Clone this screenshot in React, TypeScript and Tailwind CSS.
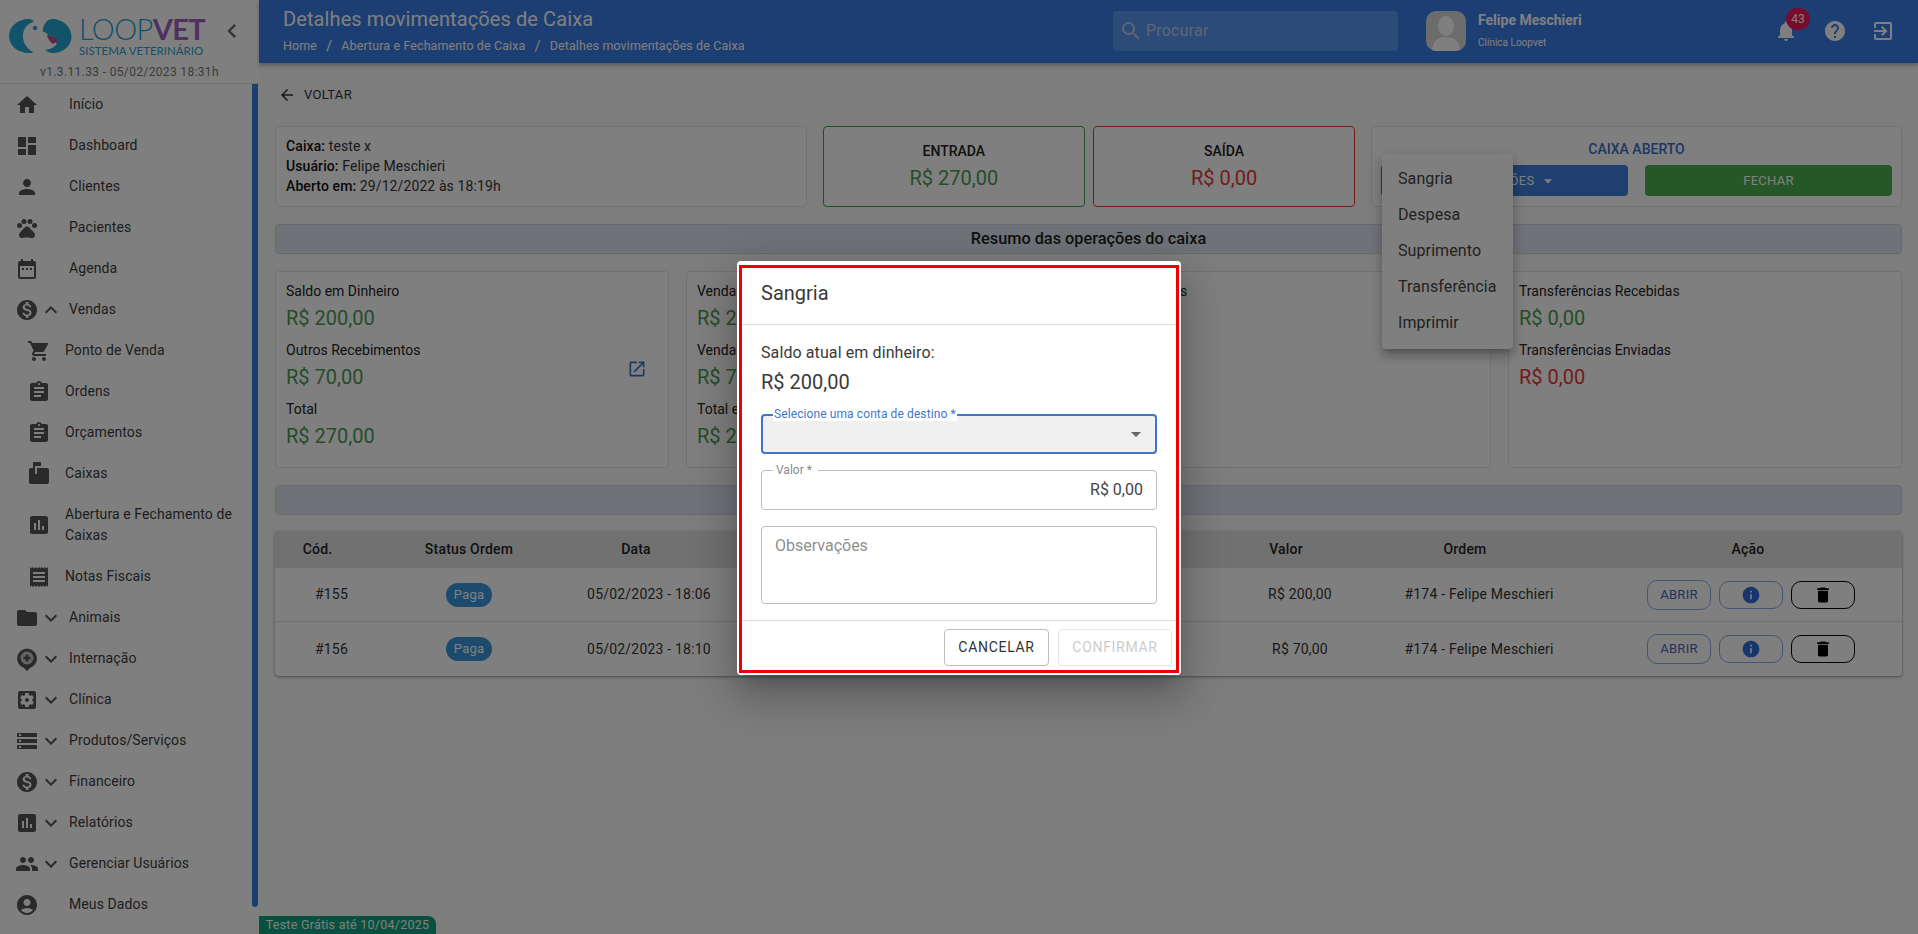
import React from "react";
import {
  MdHome, MdDashboard, MdPerson, MdPets, MdDateRange, MdMonetizationOn, MdExpandLess, MdExpandMore,
  MdShoppingCart, MdAssignment, MdMarkunreadMailbox, MdAssessment, MdReceipt, MdFolder,
  MdSettingsApplications, MdStorage, MdPeople, MdAccountCircle, MdChevronLeft, MdSearch,
  MdNotifications, MdHelp, MdExitToApp, MdArrowBack, MdOpenInNew, MdDelete, MdInfo, MdArrowDropDown,
} from "react-icons/md";

const Pin = ({ size = 24 }: { size?: number }) => (
  <svg width={size} height={size} viewBox="0 0 24 24" fill="currentColor">
    <path d="M12 1.500a10 10 0 0 0-3 19.500l3 3 3-3a10 10 0 0 0-3-19.500z" />
    <circle cx="12" cy="11" r="6.500" fill="#c8c8c8" />
    <path d="M10.700 7.500h2.600v2.200h2.200v2.600h-2.200v2.200h-2.600v-2.200H8.500V9.700h2.200z" />
  </svg>
);

type Item = { icon: React.ReactNode; label: string; chev?: "up" | "down"; sub?: boolean; tall?: boolean };
const S = 24;
const items: Item[] = [
  { icon: <MdHome size={S} />, label: "Início" },
  { icon: <MdDashboard size={S} />, label: "Dashboard" },
  { icon: <MdPerson size={S} />, label: "Clientes" },
  { icon: <MdPets size={S} />, label: "Pacientes" },
  { icon: <MdDateRange size={S} />, label: "Agenda" },
  { icon: <MdMonetizationOn size={S} />, label: "Vendas", chev: "up" },
  { icon: <MdShoppingCart size={S} />, label: "Ponto de Venda", sub: true },
  { icon: <MdAssignment size={S} />, label: "Ordens", sub: true },
  { icon: <MdAssignment size={S} />, label: "Orçamentos", sub: true },
  { icon: <MdMarkunreadMailbox size={S} />, label: "Caixas", sub: true },
  { icon: <MdAssessment size={S} />, label: "Abertura e Fechamento de Caixas", sub: true, tall: true },
  { icon: <MdReceipt size={S} />, label: "Notas Fiscais", sub: true },
  { icon: <MdFolder size={S} />, label: "Animais", chev: "down" },
  { icon: <Pin />, label: "Internação", chev: "down" },
  { icon: <MdSettingsApplications size={S} />, label: "Clínica", chev: "down" },
  { icon: <MdStorage size={S} />, label: "Produtos/Serviços", chev: "down" },
  { icon: <MdMonetizationOn size={S} />, label: "Financeiro", chev: "down" },
  { icon: <MdAssessment size={S} />, label: "Relatórios", chev: "down" },
  { icon: <MdPeople size={S} />, label: "Gerenciar Usuários", chev: "down" },
  { icon: <MdAccountCircle size={S} />, label: "Meus Dados" },
];

function NavRow({ it }: { it: Item }) {
  return (
    <div className={`flex items-center ${it.tall ? "h-[62px]" : "h-[41px]"} ${it.sub ? "pl-[27px]" : "pl-[15px]"}`}>
      <span className="flex w-[24px] shrink-0 justify-center text-[#555]">{it.icon}</span>
      {!it.sub && (
        <span className="flex w-[24px] shrink-0 justify-center text-[#555]">
          {it.chev === "up" && <MdExpandLess size={24} className="shrink-0" />}
          {it.chev === "down" && <MdExpandMore size={24} className="shrink-0" />}
        </span>
      )}
      <span className={`${it.sub ? "ml-[14px] w-[180px]" : "ml-[6px] w-[176px]"} text-[14px] leading-[21px] tracking-[0.1px] text-[#3c3c3c]`}>{it.label}</span>
    </div>
  );
}

function Logo() {
  return (
    <div className="flex h-[62px] items-center pl-[9px] pt-[10px]">
      <svg width="63" height="36" viewBox="0 0 63 36" className="shrink-0">
        <path d="M20 1C8 1 0 9 0 18s8 17 20 17c2.500 0 4.500-.5 4.500-.5C17 30 14 24.500 14 18S17 6.500 25 3.500C25 3.500 23 1 20 1z" fill="#24a6d4" />
        <circle cx="26" cy="10" r="2.200" fill="#24a6d4" />
        <path d="M43 1c11 0 19.500 8 19.500 17.500S54 35 44 35c-3 0-6-1.500-8-3 5-.5 10-3 12-6.500L40 20c-2-1-2-1.500-1-2.500 0-1-2-3-4-3.500-1 0-1.500-1-1-3C35 5 39 1 43 1z" fill="#24a6d4" />
        <path d="M38 17.500l11 3c-1.500 3-3 4.500-5 5.500-3-2-5-5-6-8.500z" fill="#c04a80" />
      </svg>
      <div className="ml-[7px] flex w-[124px] flex-col">
        <div className="h-[28px] whitespace-nowrap text-[29px] leading-[28px] tracking-[-0.6px] text-[#28a0d0] [font-family:'Lato',sans-serif]">
          <span className="font-light">LOOP</span>
          <span className="font-bold text-[#a060c0]">VET</span>
        </div>
        <div className="mt-[2px] whitespace-nowrap text-[11.500px] leading-[12px] text-[#28a0d0] [font-family:'Lato',sans-serif]">SISTEMA VETERINÁRIO</div>
      </div>
      <MdChevronLeft size={28} className="ml-[15px] -mt-[10px] shrink-0 text-[#666]" />
    </div>
  );
}

function Sidebar() {
  return (
    <aside className="flex h-[934px] w-[259px] shrink-0 flex-col bg-[#ffffff]">
      <div className="h-[84px] shrink-0 border-b border-[#e0e0e0]">
        <Logo />
        <div className="text-center text-[12px] leading-[20px] tracking-[0.35px] text-[#777]">v1.3.11.33 - 05/02/2023 18:31h</div>
      </div>
      <nav className="w-[252px]">
        {items.map((it) => <NavRow key={it.label} it={it} />)}
      </nav>
    </aside>
  );
}

function Header() {
  return (
    <header className="relative z-10 flex h-[63px] shrink-0 bg-[#3a7de6] shadow-[0_2px_4px_rgba(0,0,0,0.3)]">
      <div className="w-[854px] pl-[24px] pt-[6px] text-white">
        <div className="text-[20px] leading-[26px] tracking-[0.1px]">Detalhes movimentações de Caixa</div>
        <div className="mt-[5px] flex items-center text-[12.500px] leading-[18px] tracking-[0.1px]">
          <span>Home</span><span className="mx-[9px] text-[15px]">/</span>
          <span>Abertura e Fechamento de Caixa</span><span className="mx-[9px] text-[15px]">/</span>
          <span>Detalhes movimentações de Caixa</span>
        </div>
      </div>
      <div className="mt-[11px] flex h-[40px] w-[285px] items-center rounded-[4px] bg-[#5a96f0] pl-[6px] text-[#b8cce8]">
        <MdSearch size={24} />
        <span className="ml-[3px] text-[16px] tracking-[0.2px]">Procurar</span>
      </div>
      <div className="ml-[28px] mt-[11px] h-[40px] w-[40px] overflow-hidden rounded-[10px] bg-[#d8d8d8]">
        <svg viewBox="0 0 40 40" width="40" height="40"><ellipse cx="20" cy="15" rx="8" ry="10" fill="#fff" /><path d="M6 40c0-10 6-14 14-14s14 4 14 14z" fill="#fff" /></svg>
      </div>
      <div className="ml-[12px] w-[296px] pt-[10px] text-white">
        <div className="text-[14px] font-bold leading-[20px]">Felipe Meschieri</div>
        <div className="mt-[6px] text-[10px] leading-[14px]">Clínica Loopvet</div>
      </div>
      <div className="relative mt-[19px] flex h-[24px] w-[24px] justify-center text-white">
        <MdNotifications size={24} />
        <span className="absolute left-[12px] top-[-11px] flex h-[22px] w-[24px] items-center justify-center rounded-full bg-[#f01858] text-[12px]">43</span>
      </div>
      <MdHelp size={24} className="ml-[25px] mt-[19px] text-white" />
      <MdExitToApp size={24} className="ml-[24px] mt-[19px] text-white" />
    </header>
  );
}

function Card({ className = "", children }: { className?: string; children: React.ReactNode }) {
  return <div className={`rounded-[4px] border border-[#e4e4e4] bg-white ${className}`}>{children}</div>;
}

const Bar = ({ children }: { children?: React.ReactNode }) => (
  <div className="flex h-[30px] items-center justify-center rounded-[4px] border border-[#cfd4da] bg-[#dfe6f0] text-[16.300px] font-medium text-[#222]">{children}</div>
);

function Stat({ label, value, red }: { label: string; value: string; red?: boolean }) {
  return (
    <div className="h-[59px]">
      <div className="text-[14px] leading-[20px] text-[#222]">{label}</div>
      <div className={`mt-[4px] text-[20px] leading-[26px] ${red ? "text-[#e53935]" : "text-[#4a9a55]"}`}>{value}</div>
    </div>
  );
}

const colsClass = "grid grid-cols-[85px_218px_142px_516px_100px_258px_308px]";

function Row({ id, value, last }: { id: string; value: string; last?: boolean }) {
  return (
    <div className={`${colsClass} h-[54px] items-center text-center text-[14px] tracking-[0.2px] text-[#333] ${last ? "" : "border-b border-[#e0e0e0]"}`}>
      <div className="pl-[28px]">{id}</div>
      <div className="flex justify-center">
        <span className="flex h-[24px] w-[46px] items-center justify-center rounded-full bg-[#3a96dc] text-[13px] text-white">Paga</span>
      </div>
      <div className="whitespace-nowrap">05/02/2023 - 18:{id === "#155" ? "06" : "10"}</div>
      <div />
      <div className="whitespace-nowrap pl-[28px]">{value}</div>
      <div className="whitespace-nowrap pl-[28px]">#174 - Felipe Meschieri</div>
      <div className="flex justify-center gap-[8px] pl-[6px]">
        <span className="flex h-[30px] w-[64px] items-center justify-center rounded-[10px] border border-[#8aa8e0] text-[13px] tracking-[0.3px] text-[#3c68c0]">ABRIR</span>
        <span className="mt-[1px] flex h-[28px] w-[64px] items-center justify-center rounded-[10px] border border-[#8aa8e0] text-[#2f6de0]"><MdInfo size={20} /></span>
        <span className="mt-[1px] flex h-[28px] w-[64px] items-center justify-center rounded-[10px] border border-black text-black"><MdDelete size={20} /></span>
      </div>
    </div>
  );
}

function Main() {
  return (
    <div className="flex min-w-0 flex-1 flex-col bg-[#fafafa]">
      <Header />
      <div className="px-[16px]">
        <div className="flex h-[63px] items-center pl-[3px] text-[#333]">
          <MdArrowBack size={18} />
          <span className="ml-[8px] text-[13px] tracking-[0.3px]">VOLTAR</span>
        </div>
        <div className="flex">
          <Card className="h-[81px] w-[532px] px-[10px] pt-[9px] text-[14px] leading-[20px] tracking-[0.1px] text-[#333]">
            <div><b className="font-medium text-[#111]">Caixa:</b> teste x</div>
            <div><b className="font-medium text-[#111]">Usuário:</b> Felipe Meschieri</div>
            <div><b className="font-medium text-[#111]">Aberto em:</b> 29/12/2022 às 18:19h</div>
          </Card>
          <div className="ml-[16px] flex h-[81px] w-[263px] flex-col items-center rounded-[4px] border border-[#43a047] bg-white pt-[14px]">
            <div className="text-[14px] font-medium leading-[20px] text-[#222]">ENTRADA</div>
            <div className="mt-[4px] text-[20px] leading-[26px] text-[#4a9a55]">R$ 270,00</div>
          </div>
          <div className="ml-[8px] flex h-[81px] w-[262px] flex-col items-center rounded-[4px] border border-[#e53935] bg-white pt-[14px]">
            <div className="text-[14px] font-medium leading-[20px] text-[#222]">SAÍDA</div>
            <div className="mt-[4px] text-[20px] leading-[26px] text-[#e53935]">R$ 0,00</div>
          </div>
          <Card className="ml-[16px] h-[81px] w-[531px] px-[9px] pt-[12px]">
            <div className="text-center text-[14px] font-medium leading-[20px] text-[#3c6cc8]">CAIXA ABERTO</div>
            <div className="mt-[6px] flex gap-[17px]">
              <div className="flex h-[31px] w-[247px] items-center justify-center rounded-[4px] bg-[#3f7fe0] pl-[7px] text-[13px] tracking-[0.3px] text-white">
                OPERAÇÕES <MdArrowDropDown size={20} className="ml-[3px]" />
              </div>
              <div className="flex h-[31px] w-[247px] items-center justify-center rounded-[4px] bg-[#4caf50] text-[13px] tracking-[0.3px] text-white">FECHAR</div>
            </div>
          </Card>
        </div>
        <div className="mt-[17px]"><Bar>Resumo das operações do caixa</Bar></div>
        <div className="mt-[17px] grid grid-cols-4 gap-[17px]">
          <Card className="relative h-[197px] px-[10px] pt-[9px]">
            <Stat label="Saldo em Dinheiro" value="R$ 200,00" />
            <Stat label="Outros Recebimentos" value="R$ 70,00" />
            <Stat label="Total" value="R$ 270,00" />
            <MdOpenInNew size={20} className="absolute left-[351px] top-[87px] text-[#3c6cc8]" />
          </Card>
          <Card className="h-[197px] px-[10px] pt-[9px]">
            <Stat label="Vendas em Dinheiro" value="R$ 200,00" />
            <Stat label="Vendas em Outros" value="R$ 70,00" />
            <Stat label="Total em Vendas" value="R$ 270,00" />
          </Card>
          <Card className="h-[197px] px-[10px] pt-[9px]">
            <Stat label="Suprimentos" value="R$ 0,00" />
          </Card>
          <Card className="h-[197px] px-[10px] pt-[9px]">
            <Stat label="Transferências Recebidas" value="R$ 0,00" />
            <Stat label="Transferências Enviadas" value="R$ 0,00" red />
          </Card>
        </div>
        <div className="mt-[17px]"><Bar /></div>
        <div className="mt-[16px] rounded-[4px] bg-white shadow-[0_1px_3px_rgba(0,0,0,0.4)]">
          <div className={`${colsClass} h-[37px] items-center rounded-t-[4px] bg-[#e2e2e2] text-center text-[14px] font-medium tracking-[0.2px] text-[#222]`}>
            <div>Cód.</div><div>Status Ordem</div><div className="pr-[26px]">Data</div><div /><div>Valor</div><div>Ordem</div><div>Ação</div>
          </div>
          <Row id="#155" value="R$ 200,00" />
          <Row id="#156" value="R$ 70,00" last />
        </div>
      </div>
    </div>
  );
}

function Modal() {
  return (
    <div className="absolute left-[737px] top-[261px] z-30 h-[414px] w-[444px] rounded-[4px] bg-white px-[2px] pb-[2px] pt-[4px] shadow-[0_11px_15px_-7px_rgba(0,0,0,0.2),0_24px_38px_3px_rgba(0,0,0,0.14),0_9px_46px_8px_rgba(0,0,0,0.12)]">
      <div className="flex h-[408px] flex-col border-[3px] border-[#f00000] text-[#3a3a3a]">
        <div className="flex h-[57px] shrink-0 items-center border-b border-[#dcdcdc] pb-[6px] pl-[19px] text-[20px]">Sangria</div>
        <div className="h-[295px] shrink-0 px-[19px]">
          <div className="mt-[17px] text-[16px] leading-[22px] tracking-[0.1px]">Saldo atual em dinheiro:</div>
          <div className="mt-[3px] text-[20px] leading-[30px]">R$ 200,00</div>
          <div className="relative mt-[17px] flex h-[40px] items-center justify-end rounded-[4px] border-2 border-[#3f76c5] bg-[#f0f0f0] pr-[7px] text-[#666]">
            <span className="absolute left-[10px] top-[-9px] bg-white px-[1px] text-[12px] leading-[14px] tracking-[0.1px] text-[#3f76c5]">Selecione uma conta de destino *</span>
            <MdArrowDropDown size={24} />
          </div>
          <div className="relative mt-[16px] flex h-[40px] items-center justify-end rounded-[4px] border border-[#bdbdbd] pr-[13px] text-[16px] text-[#444]">
            <span className="absolute left-[11px] top-[-8px] bg-white px-[3px] text-[12px] leading-[14px] text-[#8a8a8a]">Valor *&nbsp;</span>
            R$ 0,00
          </div>
          <div className="mt-[16px] h-[78px] rounded-[4px] border border-[#bdbdbd] pl-[13px] pt-[7px] text-[16px] text-[#8f8f8f]">Observações</div>
        </div>
        <div className="flex flex-1 items-start justify-end gap-[9px] border-t border-[#dcdcdc] pr-[4px] pt-[8px]">
          <span className="flex h-[37px] w-[105px] items-center justify-center rounded-[4px] border border-[#bdbdbd] text-[14px] tracking-[0.7px] text-[#333]">CANCELAR</span>
          <span className="flex h-[37px] w-[114px] items-center justify-center rounded-[4px] border border-[#e6e6e6] text-[14px] tracking-[0.7px] text-[#cccccc]">CONFIRMAR</span>
        </div>
      </div>
    </div>
  );
}

export default function App() {
  return (
    <div className="relative flex h-[934px] w-[1918px] overflow-hidden bg-white font-['Roboto',sans-serif]">
      <Sidebar />
      <Main />
      {/* scrollbar thumb */}
      <div className="absolute left-[252px] top-[84px] h-[823px] w-[6px] rounded-b-[3px] bg-[#3a7de6]" />
      {/* trial badge */}
      <div className="absolute bottom-0 left-[259px] flex h-[18px] w-[177px] items-center justify-center rounded-tr-[8px] bg-[#10a37f] text-[12.500px] tracking-[0.25px] text-white">Teste Grátis até 10/04/2025</div>
      {/* dropdown menu */}
      <div className="absolute left-[1382px] top-[154px] z-10 h-[195px] w-[131px] rounded-[4px] bg-white pb-[6px] pl-[16px] pt-[7px] text-[16px] tracking-[0.1px] text-[#444] shadow-[0_5px_5px_-3px_rgba(0,0,0,0.2),0_8px_10px_1px_rgba(0,0,0,0.14),0_3px_14px_2px_rgba(0,0,0,0.12)]">
        {["Sangria", "Despesa", "Suprimento", "Transferência", "Imprimir"].map((m) => (
          <div key={m} className="flex h-[36px] items-center">{m}</div>
        ))}
      </div>
      {/* backdrop */}
      <div className="absolute inset-0 z-20 bg-black/50" />
      <Modal />
    </div>
  );
}
